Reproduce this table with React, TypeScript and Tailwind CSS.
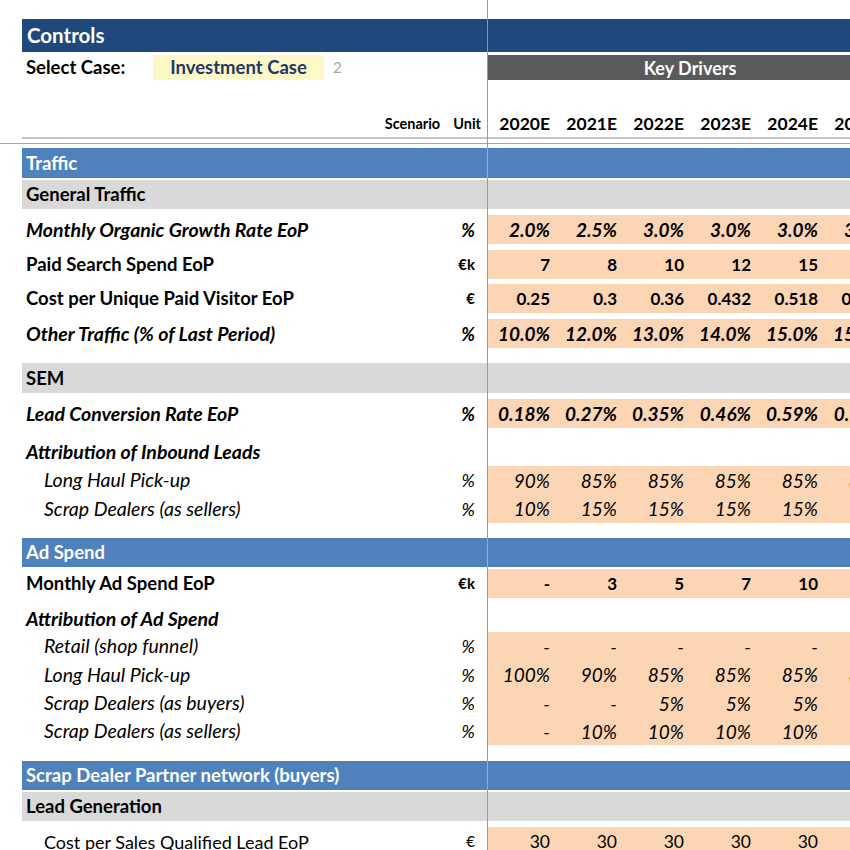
import { ReactNode } from "react";

type TStyle = "bi" | "b" | "i" | "n";

type TLine = {
  label: string;
  unit?: string;
  vals: string[];
  style: TStyle;
  indent?: boolean;
  h: string;
};

// label / value font per row style
const labelCls: Record<TStyle, string> = {
  bi: "font-bold italic text-[19.5px]",
  b: "font-bold text-[18.5px]",
  i: "italic text-[19.5px]",
  n: "text-[18px]",
};

const valueCls: Record<TStyle, string> = {
  bi: "font-bold italic text-[19px]",
  b: "font-bold text-[17px]",
  i: "italic text-[19px]",
  n: "text-[17.5px]",
};

const unitCls: Record<TStyle, string> = {
  bi: "font-bold italic",
  b: "font-bold",
  i: "italic",
  n: "",
};

const years = ["2020E", "2021E", "2022E", "2023E", "2024E", "2025E"];

const Row = ({
  h,
  left,
  right,
  leftCls = "",
  rightCls = "",
  divCls = "bg-[#9a9a9a]",
  edgeCls = "",
}: {
  h: string;
  left?: ReactNode;
  right?: ReactNode;
  leftCls?: string;
  rightCls?: string;
  divCls?: string;
  edgeCls?: string;
}) => {
  return (
    <div className={`flex shrink-0 ${h}`}>
      <div className={`w-[22px] shrink-0 ${edgeCls}`} />
      <div className={`w-[465px] shrink-0 flex items-center ${leftCls}`}>{left}</div>
      <div className={`w-px shrink-0 ${divCls}`} />
      <div className={`flex-1 min-w-0 overflow-hidden flex items-center ${rightCls}`}>{right}</div>
    </div>
  );
};

const Spacer = ({ h }: { h: string }) => <Row h={h} />;

const Bar = ({ title, h, kind }: { title: string; h: string; kind: "blue" | "grey" }) => {
  const bg = kind === "blue" ? "bg-[#4f81bd]" : "bg-[#d9d9d9]";
  return (
    <Row
      h={h}
      leftCls={bg}
      rightCls={bg}
      divCls={kind === "blue" ? "bg-[#8fb0d6]" : "bg-[#9a9a9a]"}
      left={
        <span
          className={`pl-1 text-[18.5px] font-bold whitespace-nowrap ${
            kind === "blue" ? "text-white" : "text-black"
          }`}
        >
          {title}
        </span>
      }
    />
  );
};

const Values = ({ vals, cls }: { vals: string[]; cls: string }) => (
  <>
    {vals.map((v, i) => (
      <div key={i} className={`w-[67px] shrink-0 text-right pr-[5px] whitespace-nowrap ${cls}`}>
        {v}
      </div>
    ))}
  </>
);

const DataRow = ({ line }: { line: TLine }) => {
  const isEuro = line.unit?.startsWith("€");
  return (
    <Row
      h={line.h}
      rightCls="bg-[#fcd5b4]"
      left={
        <>
          <span
            className={`whitespace-nowrap ${labelCls[line.style]} ${line.indent ? "pl-[22px]" : "pl-1"}`}
          >
            {line.label}
          </span>
          {line.unit && (
            <span
              className={`ml-auto pr-[12px] ${isEuro ? "text-[15px]" : "text-[18px]"} ${unitCls[line.style]}`}
            >
              {line.unit}
            </span>
          )}
        </>
      }
      right={<Values vals={line.vals} cls={valueCls[line.style]} />}
    />
  );
};

const LabelRow = ({ label, h, pad }: { label: string; h: string; pad: string }) => (
  <Row
    h={h}
    left={<span className={`pl-1 text-[19.5px] font-bold italic ${pad}`}>{label}</span>}
  />
);

const traffic: TLine[] = [
  { label: "Monthly Organic Growth Rate EoP", unit: "%", vals: ["2.0%", "2.5%", "3.0%", "3.0%", "3.0%", "3.0%"], style: "bi", h: "h-[29px]" },
  { label: "Paid Search Spend EoP", unit: "€k", vals: ["7", "8", "10", "12", "15", "18"], style: "b", h: "h-[29px]" },
  { label: "Cost per Unique Paid Visitor EoP", unit: "€", vals: ["0.25", "0.3", "0.36", "0.432", "0.518", "0.622"], style: "b", h: "h-[29px]" },
  { label: "Other Traffic (% of Last Period)", unit: "%", vals: ["10.0%", "12.0%", "13.0%", "14.0%", "15.0%", "15.0%"], style: "bi", h: "h-[29px]" },
];

const inbound: TLine[] = [
  { label: "Long Haul Pick-up", unit: "%", vals: ["90%", "85%", "85%", "85%", "85%", "85%"], style: "i", indent: true, h: "h-[28px]" },
  { label: "Scrap Dealers (as sellers)", unit: "%", vals: ["10%", "15%", "15%", "15%", "15%", "15%"], style: "i", indent: true, h: "h-[29px]" },
];

const adSpend: TLine[] = [
  { label: "Retail (shop funnel)", unit: "%", vals: ["-", "-", "-", "-", "-", "-"], style: "i", indent: true, h: "h-[28px]" },
  { label: "Long Haul Pick-up", unit: "%", vals: ["100%", "90%", "85%", "85%", "85%", "85%"], style: "i", indent: true, h: "h-[29px]" },
  { label: "Scrap Dealers (as buyers)", unit: "%", vals: ["-", "-", "5%", "5%", "5%", "5%"], style: "i", indent: true, h: "h-[28px]" },
  { label: "Scrap Dealers (as sellers)", unit: "%", vals: ["-", "10%", "10%", "10%", "10%", "10%"], style: "i", indent: true, h: "h-[28px]" },
];

export default function App() {
  return (
    <div
      className="w-[850px] h-[850px] overflow-hidden bg-white text-black flex flex-col leading-none"
      style={{ fontFamily: "Lato, 'Open Sans', sans-serif" }}
    >
      <Spacer h="h-[19px]" />
      <Row
        h="h-[33px]"
        leftCls="bg-[#1f497d]"
        rightCls="bg-[#1f497d]"
        divCls="bg-[#7f97b8]"
        left={<span className="pl-[5px] text-[20.5px] font-bold text-white">Controls</span>}
      />
      <Spacer h="h-[3px]" />
      <Row
        h="h-[25px]"
        rightCls="bg-[#595959] justify-center"
        left={
          <>
            <span className="pl-1 w-[131px] shrink-0 text-[18.5px] font-bold">Select Case:</span>
            <div className="w-[171px] h-full bg-[#fdf9c7] flex items-center justify-center text-[18.5px] font-bold text-[#1f3864]">
              Investment Case
            </div>
            <span className="ml-[9px] text-[15px] text-[#a6a6a6]">2</span>
          </>
        }
        right={<span className="pl-[42px] text-[18px] font-bold text-white">Key Drivers</span>}
      />
      <Row
        h="h-[57px]"
        leftCls="justify-end items-end pb-[6px]"
        rightCls="items-end pb-[5px]"
        left={
          <>
            <span className="text-[14.5px] font-bold mr-[13px]">Scenario</span>
            <span className="text-[14.5px] font-bold pr-[6px]">Unit</span>
          </>
        }
        right={<Values vals={years} cls="text-[17.5px] font-bold pr-[4px]" />}
      />
      <Row h="h-[2px]" leftCls="bg-[#c4c4c4]" rightCls="bg-[#c4c4c4]" />
      <Spacer h="h-[4px]" />
      <Row h="h-px" edgeCls="bg-[#a6a6a6]" leftCls="bg-[#a6a6a6]" rightCls="bg-[#a6a6a6]" />
      <Spacer h="h-[4px]" />

      <Bar title="Traffic" h="h-[30px]" kind="blue" />
      <Spacer h="h-[2px]" />
      <Bar title="General Traffic" h="h-[29px]" kind="grey" />
      <Spacer h="h-[6px]" />
      <DataRow line={traffic[0]} />
      <Spacer h="h-[6px]" />
      <DataRow line={traffic[1]} />
      <Spacer h="h-[5px]" />
      <DataRow line={traffic[2]} />
      <Spacer h="h-[6px]" />
      <DataRow line={traffic[3]} />
      <Spacer h="h-[15px]" />

      <Bar title="SEM" h="h-[30px]" kind="grey" />
      <Spacer h="h-[6px]" />
      <DataRow
        line={{
          label: "Lead Conversion Rate EoP",
          unit: "%",
          vals: ["0.18%", "0.27%", "0.35%", "0.46%", "0.59%", "0.76%"],
          style: "bi",
          h: "h-[29px]",
        }}
      />
      <LabelRow label="Attribution of Inbound Leads" h="h-[38px]" pad="pt-[10px]" />
      {inbound.map((l, i) => (
        <DataRow key={i} line={l} />
      ))}
      <Spacer h="h-[15px]" />

      <Bar title="Ad Spend" h="h-[29px]" kind="blue" />
      <Spacer h="h-[2px]" />
      <DataRow
        line={{
          label: "Monthly Ad Spend EoP",
          unit: "€k",
          vals: ["-", "3", "5", "7", "10", "12"],
          style: "b",
          h: "h-[29px]",
        }}
      />
      <LabelRow label="Attribution of Ad Spend" h="h-[34px]" pad="pt-[8px]" />
      {adSpend.map((l, i) => (
        <DataRow key={i} line={l} />
      ))}
      <Spacer h="h-[16px]" />

      <Bar title="Scrap Dealer Partner network (buyers)" h="h-[29px]" kind="blue" />
      <Spacer h="h-[2px]" />
      <Bar title="Lead Generation" h="h-[29px]" kind="grey" />
      <Spacer h="h-[6px]" />
      <DataRow
        line={{
          label: "Cost per Sales Qualified Lead EoP",
          unit: "€",
          vals: ["30", "30", "30", "30", "30", "30"],
          style: "n",
          indent: true,
          h: "h-[29px]",
        }}
      />
    </div>
  );
}
